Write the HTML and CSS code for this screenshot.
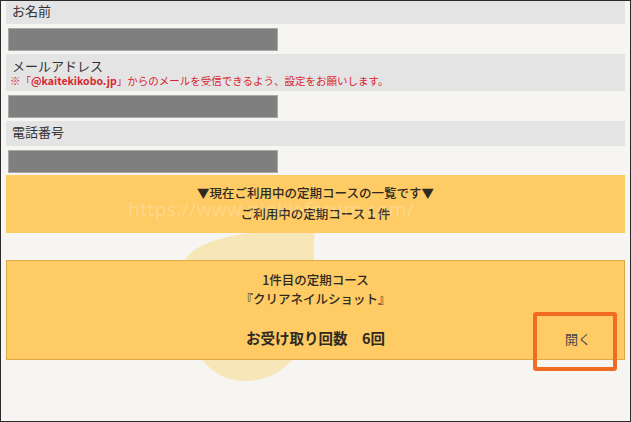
FILE: index.html
```html
<!DOCTYPE html>
<html lang="ja">
<head>
<meta charset="utf-8">
<title>会員情報</title>
<link rel="stylesheet" href="styles.css">
</head>
<body>
<div class="page">
  <svg class="blob" width="150" height="160" viewBox="0 0 150 160" aria-hidden="true">
    <path d="M14 30 C30 10 80 2 142 4 C138 30 146 70 136 104 C126 136 100 154 72 154 C44 154 24 134 14 104 C4 76 2 48 14 30 Z" fill="#f6e0a0" opacity="0.7"/>
  </svg>
  <div class="form">
    <div class="label label-first">お名前</div>
    <div class="input"></div>
    <div class="label label-tall">
      <div>メールアドレス</div>
      <div class="note">※「<b>@kaitekikobo.jp</b>」からのメールを受信できるよう、設定をお願いします。</div>
    </div>
    <div class="input"></div>
    <div class="label label-short">電話番号</div>
    <div class="input"></div>
    <div class="banner">
      <div>▼現在ご利用中の定期コースの一覧です▼</div>
      <div>ご利用中の定期コース１件</div>
      <span class="watermark">https://www.ninkieforum.com/</span>
    </div>
    <div class="course">
      <div class="course-line">1件目の定期コース</div>
      <div class="course-line">『クリアネイルショット』</div>
      <div class="course-row">
        <span></span>
        <span class="count">お受け取り回数　6回</span>
        <span class="open">開く</span>
      </div>
      <span class="highlight"></span>
    </div>
  </div>
</div>
</body>
</html>
```

FILE: styles.css
```css
* { box-sizing: border-box; }
html, body { margin: 0; padding: 0; }
body {
  font-family: "Noto Sans CJK JP", "Noto Sans", sans-serif;
  color: #333;
  background: #f7f5f1;
}
.page {
  position: relative;
  width: 631px;
  height: 422px;
  border: 1px solid #2b2b2b;
  background: #f7f5f1;
  overflow: hidden;
}
.blob {
  position: absolute;
  left: 172px;
  top: 226px;
  z-index: 0;
}
.form {
  position: relative;
  z-index: 1;
  display: flex;
  flex-direction: column;
  padding: 0 5px 0 5px;
}
.label {
  background: #e4e4e4;
  padding: 0 6px;
  font-size: 13px;
  line-height: 16px;
  color: #333;
}
.label-first {
  height: 23px;
  padding-top: 2px;
}
.label-short {
  height: 25px;
  margin-top: 3px;
  padding-top: 3px;
}
.label-tall {
  height: 37px;
  margin-top: 3px;
  padding-top: 4px;
}
.label + .input { margin-top: 4px; }
.note {
  color: #d8242e;
  font-size: 10.5px;
  line-height: 12px;
  margin-top: 1px;
  margin-left: -2px;
}
.note b { font-weight: 700; }
.input {
  width: 270px;
  height: 23px;
  margin-left: 2px;
  background: #7f7f7f;
  border: 1px solid #a9a9a9;
}
.banner {
  position: relative;
  margin-top: 2px;
  height: 58px;
  background: #fecb65;
  text-align: center;
  font-size: 12.5px;
  font-weight: 500;
  line-height: 21px;
  padding-top: 7px;
  color: #2e2a22;
}
.watermark {
  position: absolute;
  left: 122px;
  top: 23px;
  font-family: "Open Sans", "Liberation Sans", sans-serif;
  font-size: 19px;
  font-weight: 400;
  letter-spacing: 0.5px;
  color: rgba(255, 255, 255, 0.25);
  line-height: 22px;
}
.course {
  position: relative;
  margin-top: 27px;
  height: 100px;
  background: #fecb65;
  border: 1px solid #e0a846;
  text-align: center;
  color: #2e2a22;
  padding-top: 9px;
}
.course-line {
  font-size: 12.5px;
  font-weight: 500;
  line-height: 19px;
}
.course-row {
  display: grid;
  grid-template-columns: 1fr auto 1fr;
  align-items: center;
  margin-top: 20px;
}
.count {
  font-size: 14.5px;
  font-weight: 700;
  line-height: 20px;
}
.open {
  justify-self: end;
  margin-right: 33px;
  font-size: 13px;
  color: #444;
  font-weight: 400;
}
.highlight {
  position: absolute;
  left: 526px;
  top: 51px;
  width: 84px;
  height: 59px;
  border: 4px solid #f26b22;
  border-radius: 3px;
}
```
